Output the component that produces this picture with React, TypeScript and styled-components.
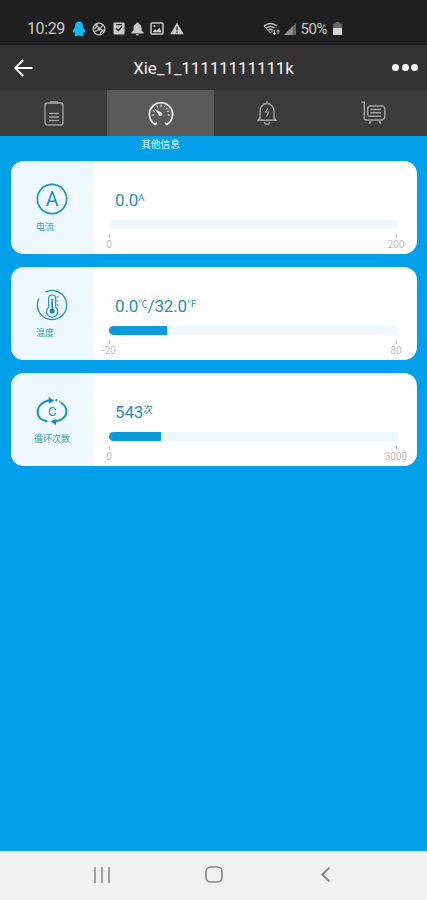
import React from 'react';
import styled, { createGlobalStyle } from 'styled-components';

const Global = createGlobalStyle`
  * { box-sizing: border-box; }
  body { margin: 0; background: #03a0e9; font-family: Roboto, "Noto Sans CJK SC", sans-serif; }
  svg { display: block; flex: none; overflow: visible; }
`;

const Screen = styled.div`
  width: 427px;
  height: 900px;
  display: flex;
  flex-direction: column;
  overflow: hidden;
  background: #03a0e9;
`;

const StatusBar = styled.div`
  height: 45px;
  flex: none;
  display: flex;
  align-items: center;
  justify-content: space-between;
  padding: 12px 85px 0 27px;
  background: #202020;
  color: #c9c9c9;
`;

const StatusGroup = styled.div<{ $gap: number }>`
  display: flex;
  align-items: center;
  gap: ${(p) => p.$gap}px;
`;

const StatusText = styled.span<{ $width: number; $size: number }>`
  width: ${(p) => p.$width}px;
  font-size: ${(p) => p.$size}px;
  line-height: 18px;
  letter-spacing: -0.4px;
  white-space: nowrap;
`;

const Header = styled.header`
  height: 45px;
  flex: none;
  display: grid;
  grid-template-columns: 60px 1fr 60px;
  align-items: center;
  background: #333;
  color: #fff;
`;

const BackButton = styled.div`
  padding-left: 14px;
`;

const Title = styled.h1`
  margin: 0;
  text-align: center;
  font-size: 17px;
  line-height: 24px;
  font-weight: 400;
  letter-spacing: -0.1px;
  color: #f4f4f4;
`;

const MoreButton = styled.div`
  display: flex;
  gap: 2.6px;
  padding-left: 25px;
`;

const Dot = styled.i`
  width: 7px;
  height: 7px;
  border-radius: 50%;
  background: #fff;
`;

const Tabs = styled.nav`
  height: 46px;
  flex: none;
  display: grid;
  grid-template-columns: repeat(4, 1fr);
  background: #3c3c3c;
`;

const Tab = styled.div<{ $active?: boolean }>`
  display: flex;
  align-items: center;
  justify-content: center;
  padding-left: 1px;
  background: ${(p) => (p.$active ? '#5a5a5a' : 'transparent')};
  color: ${(p) => (p.$active ? '#f4f4f4' : '#a0a0a0')};
`;

const TabCaption = styled.div`
  width: 107px;
  margin-left: 107px;
  height: 25px;
  flex: none;
  padding-top: 1px;
  text-align: center;
  font-size: 9.7px;
  line-height: 15px;
  font-weight: 500;
  color: #c4f0f6;
`;

const Cards = styled.main`
  flex: 1;
  display: flex;
  flex-direction: column;
  gap: 13px;
  padding: 0 10px 0 11px;
`;

const Card = styled.section`
  height: 93px;
  flex: none;
  display: flex;
  overflow: hidden;
  border-radius: 13px;
  background: #fefefe;
`;

const CardSide = styled.div`
  width: 83px;
  display: flex;
  flex-direction: column;
  align-items: center;
  padding: 22px 1px 0 0;
  background: #edf9ff;
`;

const SideLabel = styled.div<{ $wide?: boolean }>`
  width: ${(p) => (p.$wide ? 36 : 32)}px;
  margin-top: 6px;
  font-size: 9px;
  line-height: 13px;
  white-space: nowrap;
  color: #38a3a9;
`;

const CardBody = styled.div`
  flex: 1;
  padding: 27px 19px 0 15px;
`;

const Reading = styled.div`
  height: 24px;
  padding-left: 6px;
  font-size: 17px;
  line-height: 24px;
  letter-spacing: -0.15px;
  color: #278fb4;
  display: flex;
`;

const Unit = styled.span`
  font-size: 9.5px;
  line-height: 20px;
`;

const Track = styled.div<{ $tone: string }>`
  height: 9px;
  margin-top: 8px;
  border-radius: 5px 2px 2px 5px;
  background: ${(p) => p.$tone};
  overflow: hidden;
`;

const Fill = styled.div`
  height: 100%;
  background: #0a9bd8;
`;

const Scale = styled.div`
  display: flex;
  justify-content: space-between;
  margin: 5px -14px 0 -16px;
`;

const Mark = styled.div`
  width: 32px;
  display: flex;
  flex-direction: column;
  align-items: center;
  font-size: 10px;
  line-height: 14px;
  color: #bdbdc2;
  &::before {
    content: '';
    width: 1px;
    height: 4px;
    background: #c9c9cd;
  }
`;

const SystemNav = styled.footer`
  height: 49px;
  flex: none;
  display: flex;
  align-items: center;
  justify-content: space-between;
  padding: 0 97px 3px 94px;
  border-top: 1px solid #d6eef8;
  background: #f1f1f1;
  color: #858585;
`;

const HomeIcon = styled.svg`
  margin-right: 3px;
`;

const QQIcon = () => (
  <svg width="14" height="16" viewBox="0 0 14 16" fill="#16b9f5">
    <path d="M7 .5C4.400.5 3 2.500 3 5v1.200C1.700 7.800.5 9.700.7 11.200c.2 1 1 .1 1.500-.4.200.9.600 1.500 1.100 2.100-1 .4-1.300 1.900.2 2.100 1.300.2 2.600 0 3.500-.4.900.4 2.200.6 3.500.4 1.500-.2 1.200-1.700.2-2.100.5-.6.900-1.200 1.100-2.100.5.500 1.300 1.400 1.500.4.200-1.500-1-3.400-2.300-5V5C11 2.500 9.600.5 7 .5Z" />
  </svg>
);

const BallIcon = () => (
  <svg width="14" height="14" viewBox="0 0 14 14" fill="none" stroke="currentColor" strokeWidth="1.200">
    <circle cx="7" cy="7" r="5.900" />
    <path d="M2.500 3.500Q7 4 11.500 10M2 9.500Q7 9 11 3M5 1.500Q6 5 2 7M8.500 12.500Q8 9 12.500 7.500" />
    <circle cx="7" cy="7" r="1.500" fill="currentColor" stroke="none" />
  </svg>
);

const CheckIcon = () => (
  <svg width="12" height="13" viewBox="0 0 12 13">
    <rect x=".5" y=".5" width="11" height="12" rx="1" fill="currentColor" />
    <path d="M3 2.600h6M3.200 6.200l2 2.200 3.800-4" stroke="#282828" strokeWidth="1.400" fill="none" />
  </svg>
);

const BellIcon = () => (
  <svg width="13" height="14" viewBox="0 0 13 14" fill="currentColor">
    <path d="M6.500.4c-.8 0-1.200.5-1.200 1.300C3.200 2.400 2.500 4 2.500 6v2.500L.4 10.400v1h12.200v-1l-2.100-1.900V6c0-2-.7-3.600-2.800-4.300 0-.8-.4-1.300-1.200-1.300ZM5 12.200h3c-.2 1-.7 1.400-1.500 1.400S5.200 13.200 5 12.200Z" />
  </svg>
);

const PictureIcon = () => (
  <svg width="14" height="13" viewBox="0 0 14 13">
    <rect x="1" y="1" width="12" height="11" rx="1" fill="none" stroke="currentColor" strokeWidth="1.500" />
    <path d="M2.500 10.200 5 7l1.800 1.800L9.400 5.600l2.300 4.600Z" fill="currentColor" />
    <circle cx="4.500" cy="4" r="1.100" fill="currentColor" />
  </svg>
);

const WarningIcon = () => (
  <svg width="14" height="13" viewBox="0 0 14 13">
    <path d="M7 .5 13.700 12.300H.3Z" fill="currentColor" />
    <path d="M7 4.500v4M7 9.600v1.400" stroke="#333" strokeWidth="1.300" />
  </svg>
);

const WifiIcon = () => (
  <svg width="17" height="14" viewBox="0 0 17 14" fill="none" stroke="currentColor">
    <path d="M1 4Q7.500-1.200 14 4M3.400 6Q7.500 3 11.600 6M5.500 8Q7.500 6.500 9.500 8" strokeWidth="1.500" />
    <path d="M1 4l6.500 7 3-3" strokeWidth=".9" />
    <path d="M11.500 8v4.500M10 11l1.500 1.700L13 11M15 12V8m-1.500 1.500L15 7.800l1.500 1.700" strokeWidth="1" />
  </svg>
);

const SignalIcon = () => (
  <svg width="12" height="12" viewBox="0 0 12 12">
    <path d="M0 12 12 0v12Z" fill="#666" />
    <path d="M0 12 8.500 3.500V12Z" fill="#929292" />
  </svg>
);

const BatteryStatusIcon = () => (
  <svg width="9" height="13" viewBox="0 0 9 13">
    <path d="M2.500 0h4v1.500H9V13H0V1.500h2.500Z" fill="#686868" />
    <path d="M0 6h9v7H0Z" fill="#d5d5d5" />
  </svg>
);

const BackArrow = () => (
  <svg width="19" height="18" viewBox="0 0 19 18" fill="none" stroke="#fff" strokeWidth="2">
    <path d="M9.200 1 1.400 9l7.800 8M1.500 9h17" />
  </svg>
);

const BatteryTabIcon = () => (
  <svg width="20" height="26" viewBox="0 0 20 26" fill="none" stroke="currentColor" strokeWidth="1.400">
    <rect x="1" y="3" width="18" height="22" rx="2.500" />
    <path d="M6 2.300h8" strokeWidth="2.200" />
    <path d="M5 13.500h10M5 17h10M5 20.500h10" strokeWidth="1.700" />
  </svg>
);

const GaugeIcon = () => (
  <svg width="26" height="25" viewBox="0 0 26 25" fill="none" stroke="currentColor" strokeLinecap="round">
    <path d="M8.500 22.300 7.200 23.400A11.600 11.600 0 1 1 18.800 23.400L17.500 22.300" strokeWidth="1.700" strokeLinejoin="round" />
    <path d="M13 3.800v2M4.300 14h1.500M20.200 14h1.500M19.300 7.200l-1.200 1.200M9 4.800l.7 1.400M17 4.800l-.7 1.400M5.200 9.700l1.200.5M20.800 10l-1.300.5" strokeWidth="1" />
    <path d="m6.800 7.800 4.300 6.600c1.300 1.800 4.300-.3 3-2.400Z" fill="currentColor" stroke="none" />
  </svg>
);

const AlarmIcon = () => (
  <svg width="20" height="26" viewBox="0 0 20 26" fill="none" stroke="currentColor" strokeWidth="1.400">
    <path d="M10 1v2.500M3 20v-9a7 7.500 0 0 1 14 0v9M3 17.500l-2 2.800h18l-2-2.800M7.300 22c.4 3 5 3 5.400 0" />
    <path d="m11 8.500-2.500 3.500h3.200l-2.200 4.500" strokeWidth="1.200" />
  </svg>
);

const CartIcon = () => (
  <svg width="26" height="24" viewBox="0 0 26 24" fill="none" stroke="currentColor" strokeWidth="1.500">
    <path d="M.7 1.200h2.600V17q0 2 2 2H19.500q3.500 0 4.300-2.500V7.500q-.5-2.400-3.300-2.400H9.500Q6.600 5.100 6.600 8v4.500Q6.600 15.200 9 15.200h11" />
    <path d="M9.500 8.500h10.500M9.500 11.800h10.500" />
    <path d="m9.500 19.500-1 3.500M18.500 19.500l1 3.500" strokeWidth="1.800" />
  </svg>
);

const SideSvg = styled.svg.attrs({ width: 32, height: 32, viewBox: '0 0 32 32', fill: 'none' })`
  stroke: #2390ba;
  stroke-width: 1.6;
`;

const GlyphText = styled.text`
  font-family: Roboto, sans-serif;
  fill: #2390ba;
  stroke: none;
  text-anchor: middle;
`;

const CurrentIcon = () => (
  <SideSvg>
    <circle cx="16" cy="16" r="14.600" />
    <GlyphText x="16" y="22.500" fontSize="19.500">A</GlyphText>
  </SideSvg>
);

const TemperatureIcon = () => (
  <SideSvg>
    <path d="M9.500 3A14.600 14.600 0 1 1 3 9.500M1.700 13.500Q1.900 11.800 2.600 10.200" strokeWidth="1.300" />
    <path d="M12.700 9.500a3.500 3.500 0 0 1 7 0v8.700a5.600 5.600 0 1 1-7 0Z" strokeWidth="1.200" />
    <path d="M16.200 10v12" strokeWidth="1.700" />
    <circle cx="16.200" cy="22" r="2.600" fill="#1685bd" stroke="none" />
    <path d="M20.500 8h2M20.500 12h2M20.500 16h2" strokeWidth="1" />
  </SideSvg>
);

const CycleIcon = () => (
  <SideSvg>
    <path d="M11.500 26.300C5 25.300 1.600 21.500 1.600 17 1.600 11 7 6 14 5.200M24.800 7.500c3.700 2.200 5.600 5.500 5.600 9.200 0 5.200-5 8.800-11.200 9.700" strokeWidth="2" />
    <path d="m12.500 1.800 5.500 4-5 2.700ZM20.500 24l-6 2.300 5.500 4Z" fill="#1989bb" stroke="none" />
    <path d="M19.500 5.300h2M23.300 6.700h1.200" strokeWidth="2" />
    <GlyphText x="16.300" y="20.900" fontSize="13">C</GlyphText>
  </SideSvg>
);

interface MetricProps {
  icon: React.ReactNode;
  label: string;
  reading: React.ReactNode;
  percent: number;
  min: string;
  max: string;
  tone: string;
}

const Metric = ({ icon, label, reading, percent, min, max, tone }: MetricProps) => (
  <Card>
    <CardSide>
      {icon}
      <SideLabel $wide={label.length > 2}>{label}</SideLabel>
    </CardSide>
    <CardBody>
      <Reading>{reading}</Reading>
      <Track $tone={tone}>
        <Fill style={{ width: `${percent}%` }} />
      </Track>
      <Scale>
        <Mark>{min}</Mark>
        <Mark>{max}</Mark>
      </Scale>
    </CardBody>
  </Card>
);

export default function App() {
  return (
    <Screen>
      <Global />
      <StatusBar>
        <StatusGroup $gap={6.2}>
          <StatusText $width={39} $size={16}>10:29</StatusText>
          <QQIcon />
          <BallIcon />
          <CheckIcon />
          <BellIcon />
          <PictureIcon />
          <WarningIcon />
        </StatusGroup>
        <StatusGroup $gap={4.5}>
          <WifiIcon />
          <SignalIcon />
          <StatusText $width={28} $size={15}>50%</StatusText>
          <BatteryStatusIcon />
        </StatusGroup>
      </StatusBar>
      <Header>
        <BackButton><BackArrow /></BackButton>
        <Title>Xie_1_11111111111k</Title>
        <MoreButton><Dot /><Dot /><Dot /></MoreButton>
      </Header>
      <Tabs>
        <Tab><BatteryTabIcon /></Tab>
        <Tab $active><GaugeIcon /></Tab>
        <Tab><AlarmIcon /></Tab>
        <Tab><CartIcon /></Tab>
      </Tabs>
      <TabCaption>其他信息</TabCaption>
      <Cards>
        <Metric icon={<CurrentIcon />} label="电流" reading={<>0.0<Unit>A</Unit></>} percent={0} min="0" max="200" tone="#eef7fc" />
        <Metric icon={<TemperatureIcon />} label="温度" reading={<>0.0<Unit>℃</Unit>/32.0<Unit>℉</Unit></>} percent={20} min="-20" max="80" tone="#eff7fc" />
        <Metric icon={<CycleIcon />} label="循环次数" reading={<>543<Unit>次</Unit></>} percent={18.1} min="0" max="3000" tone="#ebf9fb" />
      </Cards>
      <SystemNav>
        <svg width="16" height="16" viewBox="0 0 16 16" stroke="currentColor" strokeWidth="1.500">
          <path d="M1 0v16M8 0v16M15 0v16" />
        </svg>
        <HomeIcon width="18" height="17" viewBox="0 0 18 17" fill="none" stroke="currentColor" strokeWidth="1.600">
          <rect x="1" y="1" width="16" height="15" rx="4.500" />
        </HomeIcon>
        <svg width="9" height="15" viewBox="0 0 9 15" fill="none" stroke="currentColor" strokeWidth="1.800">
          <path d="M8.500.5 1.200 7.500l7.300 7" />
        </svg>
      </SystemNav>
    </Screen>
  );
}
